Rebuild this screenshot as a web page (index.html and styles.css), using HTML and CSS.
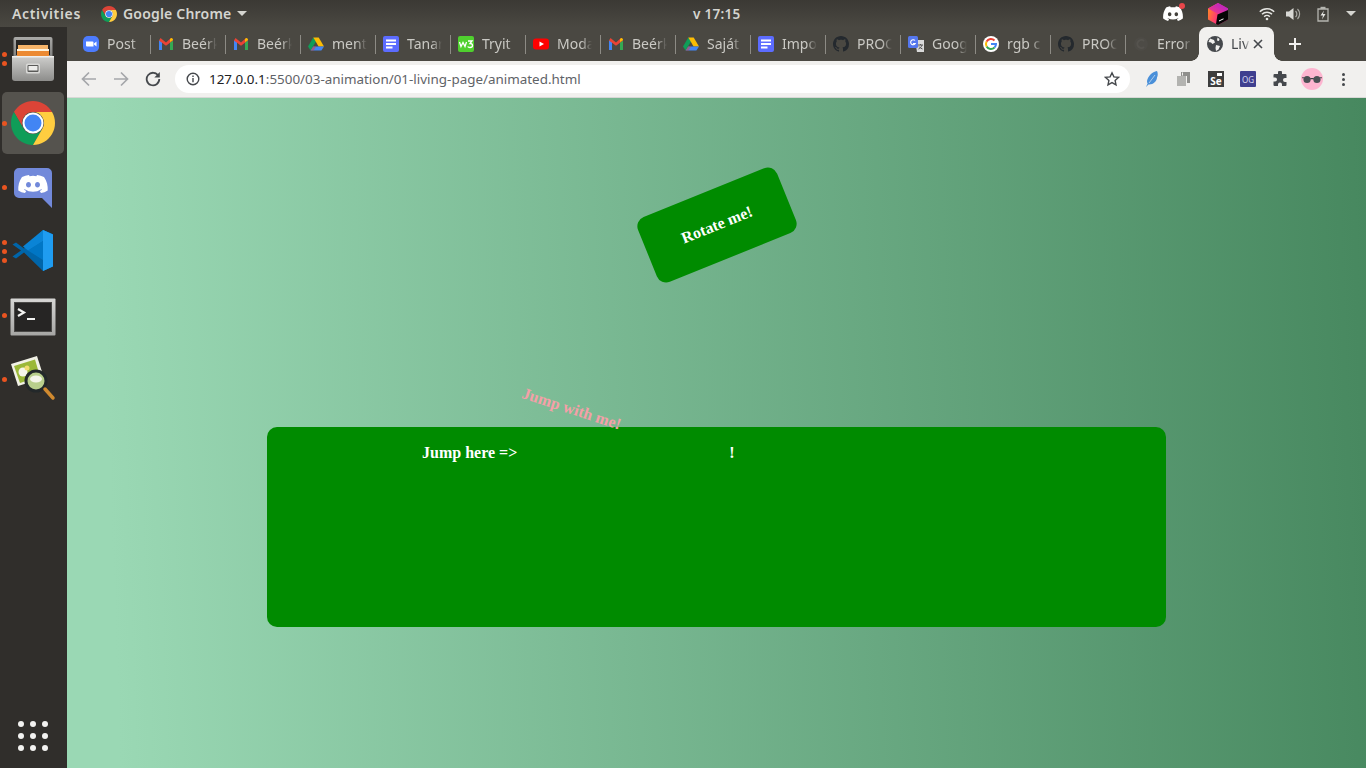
FILE: index.html
```html
<!DOCTYPE html>
<html lang="en">
<head>
<meta charset="utf-8">
<title>Living page</title>
<link rel="stylesheet" href="styles.css">
</head>
<body>
<svg class="defs" width="0" height="0" aria-hidden="true">
  <defs>
    <symbol id="chrome" viewBox="2 2 44 44">
      <path fill="#db4437" d="M4.950 13A22 22 0 0 1 43.050 13H24A11 11 0 0 0 14.470 29.500Z"/>
      <path fill="#0f9d58" d="M4.950 13 14.470 29.500A11 11 0 0 0 33.530 29.500L24 46A22 22 0 0 1 4.950 13Z"/>
      <path fill="#ffcd40" d="M24 46 33.530 29.500A11 11 0 0 0 24 13H43.050A22 22 0 0 1 24 46Z"/>
      <circle cx="24" cy="24" r="10.500" fill="#fff"/>
      <circle cx="24" cy="24" r="8.500" fill="#4285f4"/>
    </symbol>
    <symbol id="gmail" viewBox="0 0 16 16">
      <path fill="#4285f4" d="M1 14V4l3 2v8z"/>
      <path fill="#34a853" d="M12 14V6l3-2v10z"/>
      <path fill="#ea4335" d="M1 4.500 2.500 2 8 6.500 13 2l2 2.500-7 5.300z"/>
      <path fill="#fbbc04" d="M12 6V3l1.200-1.100C14.500 1.800 15 3 15 4z"/>
    </symbol>
    <symbol id="drive" viewBox="0 0 16 16">
      <path fill="#0f9d58" d="M5.300 1.500 0 10.500l2.600 4L8 5.500z"/>
      <path fill="#fbbc04" d="M5.300 1.500h5.400l5.300 9h-5.400z"/>
      <path fill="#4285f4" d="M5.200 10.500H16l-2.600 4H2.600z"/>
      <path fill="#db4437" d="M2.600 14.500h3l2.500-4H5.200z" opacity=".55"/>
    </symbol>
    <symbol id="docs" viewBox="0 0 16 16">
      <rect width="16" height="16" rx="2" fill="#5c6cff"/>
      <path fill="#fff" d="M3 3.500h10v2H3zM3 7h10v2H3zM3 10.500h6.500v2H3z"/>
    </symbol>
    <symbol id="github" viewBox="0 0 16 16">
      <path fill="#24292e" d="M8 0C3.580 0 0 3.580 0 8c0 3.540 2.290 6.530 5.470 7.590.4.070.55-.17.55-.38 0-.19-.01-.82-.01-1.490-2.010.37-2.530-.49-2.690-.94-.09-.23-.48-.94-.82-1.130-.28-.15-.68-.52-.01-.53.63-.01 1.080.58 1.230.82.72 1.210 1.870.87 2.330.66.070-.52.280-.87.510-1.070-1.780-.2-3.640-.89-3.640-3.950 0-.87.310-1.590.820-2.150-.08-.2-.36-1.020.08-2.120 0 0 .67-.21 2.200.82.640-.18 1.320-.27 2-.27s1.360.09 2 .27c1.530-1.040 2.200-.82 2.200-.82.44 1.100.16 1.920.08 2.120.51.560.82 1.270.82 2.150 0 3.070-1.870 3.750-3.650 3.950.29.250.54.730.54 1.480 0 1.070-.01 1.930-.01 2.200 0 .210.150.460.550.380A8.010 8.010 0 0 0 16 8c0-4.420-3.580-8-8-8z"/>
    </symbol>
  </defs>
</svg>

<header class="topbar">
  <div class="top-left">
    <span class="activities">Activities</span>
    <span class="appmenu">
      <svg class="chrome-small"><use href="#chrome"/></svg>
      <span class="appname">Google Chrome</span>
      <i class="caret"></i>
    </span>
  </div>
  <div class="clock">v 17:15</div>
  <div class="tray">
    <span class="tray-discord">
      <svg viewBox="0 0 24 18" width="20" height="15"><path fill="#fff" d="M20.300 1.800A19 19 0 0 0 15.500.3l-.7 1.300a18 18 0 0 0-5.600 0L8.500.3a19 19 0 0 0-4.800 1.500C.7 6.300-.2 10.700.2 15a19 19 0 0 0 5.900 3l1.200-2-1.900-1 .5-.4a13.600 13.600 0 0 0 12.200 0l.5.400-1.900 1 1.200 2a19 19 0 0 0 5.900-3c.5-5-.8-9.400-3.500-13.200zM8 12.400c-1.200 0-2.100-1.100-2.100-2.400S6.800 7.600 8 7.600s2.200 1.100 2.100 2.400c0 1.300-.9 2.400-2.100 2.400zm8 0c-1.200 0-2.100-1.100-2.100-2.400s.9-2.400 2.100-2.400 2.200 1.100 2.100 2.400c0 1.300-.9 2.400-2.100 2.400z"/></svg>
      <i class="tray-badge"></i>
    </span>
    <svg class="jb" viewBox="0 0 20 22" width="20" height="22">
      <defs>
        <linearGradient id="jbg" x1="0" y1="0" x2="1" y2=".35"><stop offset="0" stop-color="#ff9419"/><stop offset=".55" stop-color="#ff3d6e"/><stop offset="1" stop-color="#e5127d"/></linearGradient>
        <linearGradient id="jbt" x1="0" y1="1" x2="1" y2="0"><stop offset="0" stop-color="#fb3d7a"/><stop offset="1" stop-color="#a91fd6"/></linearGradient>
      </defs>
      <path fill="url(#jbg)" d="M10 0 20 5.500V16.500L10 22 0 16.500V5.500Z"/>
      <path fill="url(#jbt)" d="M10 0 20 5.500V11L10 11 0 5.500Z"/>
      <path fill="#050505" d="M9.500 11.500 20 7V16.500L10 22 8 21Z"/>
      <path fill="#fff" d="M11 17.500 15.500 15.300V16.300L11 18.500Z"/>
    </svg>
    <svg class="wifi" viewBox="0 0 16 14" width="16" height="14"><g fill="none" stroke="#e6e6e3" stroke-width="1.500"><path d="M.8 4.800a10.200 10.200 0 0 1 14.400 0"/><path d="M3 7.300a7 7 0 0 1 10 0"/><path d="M5.200 9.700a4 4 0 0 1 5.600 0"/></g><circle cx="8" cy="12" r="1.300" fill="#e6e6e3"/></svg>
    <svg class="vol" viewBox="0 0 16 14" width="16" height="14"><path fill="#d8d8d4" d="M0 4.500h3L7.500 1v12L3 9.500H0z"/><path fill="none" stroke="#a9a9a4" stroke-width="1.200" d="M9.500 4a4 4 0 0 1 0 6M11.500 2a7 7 0 0 1 0 10"/></svg>
    <svg class="batt" viewBox="0 0 12 16" width="12" height="16"><path fill="none" stroke="#b5b5b0" stroke-width="1.300" d="M1 3h10v12H1z"/><path fill="#b5b5b0" d="M3.500.8h5V3h-5z"/><path fill="#e6e6e3" d="M7 4.500 3.500 9.500H6L5 13.500l3.500-5.500H6z"/></svg>
    <i class="caret caret-tray"></i>
  </div>
</header>

<div class="workspace">
  <nav class="dock">
    <div class="dock-item">
      <span class="pips"><i></i><i></i></span>
      <svg class="dock-icon icon-files" viewBox="0 0 42 44" width="42" height="44">
        <defs>
          <linearGradient id="cab" x1="0" y1="0" x2="0" y2="1"><stop offset="0" stop-color="#cfcfcd"/><stop offset="1" stop-color="#8d8d8b"/></linearGradient>
          <linearGradient id="cabtop" x1="0" y1="0" x2="0" y2="1"><stop offset="0" stop-color="#a9a9a7"/><stop offset="1" stop-color="#7d7d7b"/></linearGradient>
        </defs>
        <rect x="1.500" y="0" width="39" height="22" rx="2" fill="url(#cabtop)"/>
        <rect x="4" y="3" width="34" height="15" fill="#262523"/>
        <rect x="6" y="8" width="30" height="4" fill="#f6b469"/>
        <rect x="5" y="12" width="32" height="2" fill="#fff3dc"/>
        <rect x="5" y="14" width="32" height="5" fill="#ec8a32"/>
        <path fill="url(#cab)" d="M0 19h42v22a3 3 0 0 1-3 3H3a3 3 0 0 1-3-3z"/>
        <rect x="0" y="19" width="42" height="1.500" fill="#f0f0ee"/>
        <rect x="14" y="26.500" width="14" height="10" rx="1.500" fill="#d9d9d7"/>
        <rect x="15.500" y="28" width="11" height="7" rx="1" fill="#5a5a58"/>
        <rect x="16.500" y="29" width="9" height="4.500" fill="#ececea"/>
      </svg>
    </div>
    <div class="dock-item dock-active">
      <span class="pips"><i></i></span>
      <svg class="dock-icon" width="44" height="44"><use href="#chrome"/></svg>
    </div>
    <div class="dock-item">
      <span class="pips"><i></i></span>
      <svg class="dock-icon icon-discord" viewBox="0 0 38 40" width="38" height="40">
        <path fill="#7289da" d="M5 0h28a5 5 0 0 1 5 5v35l-10-10H5a5 5 0 0 1-5-5V5a5 5 0 0 1 5-5z"/>
        <path fill="#fff" d="M30 9a18 18 0 0 0-7-2l-.6 1.200a17 17 0 0 0-6.800 0L15 7a18 18 0 0 0-7 2C5 13 4 18 4.300 22.500A15 15 0 0 0 11 25l1.300-2-2.300-1.200.7-.5a15 15 0 0 0 16.600 0l.7.500L25.700 23l1.300 2a15 15 0 0 0 6.700-2.500C34 18 33 13 30 9zM14.500 19.500c-1.400 0-2.500-1.300-2.500-2.800s1.100-2.800 2.500-2.800 2.500 1.300 2.500 2.800-1.100 2.800-2.500 2.800zm9 0c-1.400 0-2.500-1.300-2.500-2.800s1.100-2.800 2.500-2.800 2.500 1.300 2.500 2.800-1.100 2.800-2.500 2.800z"/>
      </svg>
    </div>
    <div class="dock-item">
      <span class="pips"><i></i><i></i><i></i></span>
      <svg class="dock-icon icon-code" viewBox="0 0 42 43" width="42" height="43">
        <path fill="#0065a9" d="M41 5.300v32L31 42 12 23.500 4 29.500.5 27.500 9 21.500.5 15.500 4 13.500l8 6L31 1z"/>
        <path fill="#007acc" d="M31 1 41 5.500V37L31 42V12L16 21.500 31 31z" opacity=".8"/>
        <path fill="#1f9cf0" d="M31 1 41 5.500v32L31 42z"/>
        <path fill="#0a84d6" d="M31 12 16 21.500 11 17.500 31 1z"/>
      </svg>
    </div>
    <div class="dock-item">
      <span class="pips"><i></i></span>
      <svg class="dock-icon icon-term" viewBox="0 0 46 38" width="46" height="38">
        <defs><linearGradient id="tframe" x1="0" y1="0" x2="0" y2="1"><stop offset="0" stop-color="#d6d6d4"/><stop offset="1" stop-color="#a6a6a4"/></linearGradient></defs>
        <rect x=".5" y=".5" width="45" height="37" rx="1" fill="url(#tframe)"/>
        <rect x="4" y="4" width="38" height="30" fill="#4a4947"/>
        <rect x="5" y="5" width="36" height="28" fill="#262524"/>
        <path fill="none" stroke="#f2f2f0" stroke-width="2.200" d="M8 11l6 3.500L8 18"/>
        <rect x="17" y="20" width="8" height="2" fill="#f2f2f0"/>
      </svg>
    </div>
    <div class="dock-item">
      <span class="pips"><i></i></span>
      <svg class="dock-icon" viewBox="0 0 46 46" width="46" height="46">
        <path fill="#f1f1e6" d="M1 8 27 0l7 22-26 8z"/>
        <path fill="#9bb838" d="M4 10 25 3.500l5 17L10 27z"/>
        <circle cx="13" cy="16" r="4.500" fill="#f5f5ea"/>
        <circle cx="17" cy="12" r="2.500" fill="#f2dd70"/>
        <circle cx="26" cy="25" r="10" fill="#b9cf8c" stroke="#23282a" stroke-width="3"/>
        <ellipse cx="26" cy="23" rx="6" ry="3.500" fill="#f5f5ea"/>
        <path stroke="#d08a2f" stroke-width="3.500" stroke-linecap="round" d="M35 33l8 9"/>
      </svg>
    </div>
    <div class="app-grid">
      <i></i><i></i><i></i><i></i><i></i><i></i><i></i><i></i><i></i>
    </div>
  </nav>

  <div class="browser">
    <div class="tabstrip">
      <div class="tab"><svg class="fav" viewBox="0 0 16 16"><rect width="16" height="16" rx="5" fill="#4d7cfe"/><path fill="#fff" d="M3 5.500h6.500a1 1 0 0 1 1 1v4H4a1 1 0 0 1-1-1zM11 7.500l2.500-2v5l-2.500-2z"/></svg><span class="tab-title">Post</span></div>
      <div class="tab"><svg class="fav"><use href="#gmail"/></svg><span class="tab-title">Beérk</span></div>
      <div class="tab"><svg class="fav"><use href="#gmail"/></svg><span class="tab-title">Beérk</span></div>
      <div class="tab"><svg class="fav"><use href="#drive"/></svg><span class="tab-title">ment</span></div>
      <div class="tab"><svg class="fav"><use href="#docs"/></svg><span class="tab-title">Tanar</span></div>
      <div class="tab"><svg class="fav" viewBox="0 0 16 16"><rect width="16" height="16" rx="2" fill="#4fd02e"/><path fill="none" stroke="#fff" stroke-width="1.300" d="M1.500 6l1.500 4.500L5 6.500l2 4L8.500 6M10 5h4l-2 2.500c2 0 2.500 1 2.500 2s-1 2-2.500 2-2-.5-2.300-1"/></svg><span class="tab-title">Tryit</span></div>
      <div class="tab"><svg class="fav" viewBox="0 0 16 16"><rect y="2.500" width="16" height="11" rx="3" fill="#f00"/><path fill="#fff" d="M6.500 5.500v5L11 8z"/></svg><span class="tab-title">Moda</span></div>
      <div class="tab"><svg class="fav"><use href="#gmail"/></svg><span class="tab-title">Beérk</span></div>
      <div class="tab"><svg class="fav"><use href="#drive"/></svg><span class="tab-title">Saját</span></div>
      <div class="tab"><svg class="fav"><use href="#docs"/></svg><span class="tab-title">Impo</span></div>
      <div class="tab"><svg class="fav"><use href="#github"/></svg><span class="tab-title">PROC</span></div>
      <div class="tab"><svg class="fav" viewBox="0 0 16 16"><path fill="#d9d9d9" d="M7 4h9v12H9z"/><rect width="10" height="12" rx="1.500" fill="#5577ee"/><path fill="none" stroke="#fff" stroke-width="1.100" d="M7 4.500a2.500 2.500 0 1 0 .3 3H5"/><path fill="none" stroke="#555" stroke-width="1" d="M10 9h5M12.500 8v1M14 9c-.5 2-2 3.500-3.500 4M11 10.500c.8 1.200 2 2 3.500 2.500"/></svg><span class="tab-title">Goog</span></div>
      <div class="tab"><svg class="fav" viewBox="0 0 16 16"><circle cx="8" cy="8" r="8" fill="#fff"/><path fill="none" stroke="#4285f4" stroke-width="2" d="M8 8h5a5 5 0 0 1-1.500 3.500"/><path fill="none" stroke="#34a853" stroke-width="2" d="M11.500 11.500A5 5 0 0 1 3.600 10.400"/><path fill="none" stroke="#fbbc05" stroke-width="2" d="M3.600 10.400a5 5 0 0 1 0-4.800"/><path fill="none" stroke="#ea4335" stroke-width="2" d="M3.600 5.600A5 5 0 0 1 11.500 4.500"/></svg><span class="tab-title">rgb c</span></div>
      <div class="tab"><svg class="fav"><use href="#github"/></svg><span class="tab-title">PROC</span></div>
      <div class="tab tab-last"><svg class="fav" viewBox="0 0 16 16"><circle cx="8" cy="8" r="7" fill="#4d4b46"/><path fill="none" stroke="#55534e" stroke-width="2" d="M11 5a4 4 0 1 0 0 6"/></svg><span class="tab-title">Error</span></div>
      <div class="tab tab-active">
        <svg class="fav" viewBox="0 0 16 16"><circle cx="8" cy="8" r="8" fill="#45484c"/><path fill="#f1f0ee" d="M3 2.500 7 4l1 2.500L5.500 8 4 6.500 1.500 6zM9 9l4 1-1.500 3.500L9 15l-.5-3zM10.500 1.500 12.500 3l-.5 2-2-.5z"/></svg>
        <span class="tab-title">Liv</span>
        <svg class="tab-x" viewBox="0 0 10 10" width="10" height="10"><path stroke="#45484c" stroke-width="1.600" d="M1 1l8 8M9 1l-8 8"/></svg>
      </div>
      <svg class="new-tab" viewBox="0 0 12 12" width="12" height="12"><path stroke="#f1f0ee" stroke-width="2" d="M6 0v12M0 6h12"/></svg>
    </div>

    <div class="toolbar">
      <svg class="tb-btn" viewBox="0 0 16 16" width="16" height="16"><path fill="none" stroke="#a5a7aa" stroke-width="1.700" d="M15 8H2M8 1.500 1.500 8 8 14.500"/></svg>
      <svg class="tb-btn" viewBox="0 0 16 16" width="16" height="16"><path fill="none" stroke="#a5a7aa" stroke-width="1.700" d="M1 8h13M8 1.500 14.500 8 8 14.500"/></svg>
      <svg class="tb-btn tb-reload" viewBox="0 0 16 16" width="16" height="16"><path fill="none" stroke="#45484c" stroke-width="1.800" d="M13.500 5A6.300 6.300 0 1 0 14.300 8"/><path fill="#45484c" d="M14.800 1v5.500H9.300z"/></svg>
      <div class="omnibox">
        <svg class="info" viewBox="0 0 14 14" width="14" height="14"><circle cx="7" cy="7" r="5.800" fill="none" stroke="#45484c" stroke-width="1.400"/><path fill="#45484c" d="M6.300 6h1.400v4.300H6.300zM6.300 3.500h1.400v1.400H6.300z"/></svg>
        <span class="url"><b>127.0.0.1</b>:5500/03-animation/01-living-page/animated.html</span>
        <svg class="star" viewBox="0 0 16 16" width="16" height="16"><path fill="none" stroke="#45484c" stroke-width="1.400" d="M8 1.800l1.900 4.100 4.500.5-3.300 3 .9 4.400L8 11.600l-4 2.200.9-4.400-3.300-3 4.500-.5z"/></svg>
      </div>
      <div class="extensions">
        <svg viewBox="0 0 16 18" width="16" height="18"><path fill="#4a90d9" d="M13 1C8 2 4 6 3 11c0 1 .2 2 .6 2.600L2 17l2.500-2.500C9 15 13 11 13 7.500c1-2 1-4.500 0-6.500z"/><path stroke="#c8dcf2" stroke-width=".8" d="M5 13 11 5"/></svg>
        <svg viewBox="0 0 16 16" width="16" height="16"><path fill="#8f8f8c" d="M5 1h9v11h-3V5H5z"/><path fill="#b3b3b0" d="M1 5h9v10H1z"/><path fill="#f1f0ee" d="M6 1.500h1v3H6z"/></svg>
        <span class="ext-se"><i class="se-cam"></i><span>Se</span></span>
        <span class="ext-og">OG</span>
        <svg viewBox="0 0 16 16" width="16" height="16"><path fill="#45484c" d="M6 1.500a2 2 0 0 1 4 0V3h3.500a1 1 0 0 1 1 1v3H13a2 2 0 0 0 0 4h1.500v3a1 1 0 0 1-1 1H10v-1.500a2 2 0 0 0-4 0V15H2.500a1 1 0 0 1-1-1v-3.500H3a2 2 0 0 0 0-4H1.500V4a1 1 0 0 1 1-1H6z"/></svg>
        <span class="avatar"><svg viewBox="0 0 22 10" width="20" height="9"><circle cx="5.500" cy="5" r="4" fill="#4a5054"/><circle cx="16.500" cy="5" r="4" fill="#4a5054"/><path stroke="#3c4145" stroke-width="1.200" d="M9 4h4M0 3h2M20 3h2"/></svg></span>
        <span class="kebab"><i></i><i></i><i></i></span>
      </div>
    </div>

    <main class="page">
      <div class="rotate-card">Rotate me!</div>
      <section class="jump-box">
        <span class="jump-label">Jump here =&gt;</span><span class="jump-slot"></span><span class="jump-label">!</span>
        <span class="jumper">Jump with me!</span>
      </section>
    </main>
  </div>
</div>
</body>
</html>
```

FILE: styles.css
```css
* { box-sizing: border-box; }
html, body { margin: 0; height: 100%; overflow: hidden; }
body {
  width: 1366px;
  height: 768px;
  display: flex;
  flex-direction: column;
  font-family: "Noto Sans", sans-serif;
  background: #302e2b;
}
.defs { position: absolute; }
i { display: block; }

/* top bar */
.topbar {
  flex: 0 0 27px;
  display: flex;
  align-items: center;
  position: relative;
  padding-left: 12px;
  background: linear-gradient(#3b3934, #4a4842);
  color: #d5d5d0;
  font-size: 14px;
  font-weight: 600;
}
.top-left { display: flex; align-items: center; gap: 20px; }
.activities { letter-spacing: .65px; }
.appname { letter-spacing: .2px; }
.appmenu { display: flex; align-items: center; gap: 6px; }
.chrome-small { width: 16px; height: 16px; }
.caret {
  width: 0; height: 0;
  border-left: 5px solid transparent;
  border-right: 5px solid transparent;
  border-top: 5px solid #d5d5d0;
}
.clock { position: absolute; left: 693px; font-size: 13.500px; letter-spacing: .3px; }
.tray { margin-left: auto; display: flex; align-items: center; padding-right: 10px; }
.tray-discord { position: relative; display: flex; margin-right: 25px; }
.tray-badge {
  position: absolute; top: -3px; right: -2px;
  width: 6px; height: 6px; border-radius: 50%;
  background: #e8464a;
}
.jb { margin-right: 31px; }
.wifi { margin-right: 11px; }
.vol { margin-right: 15px; }
.batt { margin-right: 17px; }

/* layout */
.workspace { flex: 1; display: flex; min-height: 0; }
.dock {
  flex: 0 0 67px;
  display: flex;
  flex-direction: column;
  padding: 1px 0 0 2px;
  background: #302e2b;
}
.dock-item {
  position: relative;
  flex: 0 0 62px;
  width: 62px;
  margin-bottom: 2px;
  display: flex;
  align-items: center;
  justify-content: center;
  border-radius: 5px;
}
.dock-active { background: #55534e; }
.dock-icon { display: block; }
.icon-files { margin-top: -1px; }
.icon-discord { margin-top: 2px; }
.icon-code { margin-top: -2px; }
.icon-term { margin-top: 3px; }
.pips {
  position: absolute;
  left: 0; top: 0; bottom: 0;
  width: 5px;
  display: flex;
  flex-direction: column;
  justify-content: center;
  gap: 4px;
}
.pips i {
  width: 5px; height: 5px;
  border-radius: 50%;
  background: #e95420;
}
.app-grid {
  margin: auto 0 17px 16px;
  display: grid;
  grid-template-columns: repeat(3, 6px);
  gap: 6px;
}
.app-grid i { width: 6px; height: 6px; border-radius: 50%; background: #f2f2f0; }

.browser { flex: 1; min-width: 0; display: flex; flex-direction: column; }

/* tabs */
.tabstrip {
  flex: 0 0 34px;
  display: flex;
  align-items: center;
  padding-left: 8px;
  background: #4a4842;
}
.tab {
  position: relative;
  flex: 0 0 75px;
  min-width: 0;
  height: 34px;
  display: flex;
  align-items: center;
  gap: 8px;
  padding: 0 8px;
  color: #cac9c4;
  font-size: 14px;
}
.tab::after {
  content: "";
  position: absolute;
  right: -1px; top: 8px; bottom: 7px;
  width: 1px;
  background: #8d8b85;
}
.tab-last::after { display: none; }
.tab-title {
  flex: 1;
  min-width: 0;
  overflow: hidden;
  white-space: nowrap;
  padding-bottom: 2px;
  -webkit-mask-image: linear-gradient(to right, #000 70%, transparent);
  mask-image: linear-gradient(to right, #000 70%, transparent);
}
.fav { flex: 0 0 16px; width: 16px; height: 16px; }
.tab-active {
  margin-left: -1px;
  background: #f1f0ee;
  color: #45484c;
  border-radius: 8px 8px 0 0;
}
.tab-active::before,
.tab-active::after {
  content: "";
  position: absolute;
  top: auto;
  bottom: 0;
  width: 8px;
  height: 8px;
  background: radial-gradient(circle at var(--foot) 0, transparent 7.500px, #f1f0ee 8px);
}
.tab-active::before { --foot: 0; left: -8px; right: auto; }
.tab-active::after { --foot: 100%; right: -8px; left: auto; }
.tab-active .tab-title { flex: 0 0 19px; }
.tab-x { flex: 0 0 10px; margin-left: -5px; }
.new-tab { margin-left: 15px; }

/* toolbar */
.toolbar {
  flex: 0 0 37px;
  display: flex;
  align-items: center;
  padding: 0 0 0 14px;
  background: #f1f0ee;
  border-bottom: 1px solid #d8d8d6;
}
.tb-btn { margin-right: 16px; }
.tb-reload { margin-right: 14px; }
.omnibox {
  flex: 0 0 955px;
  height: 28px;
  display: flex;
  align-items: center;
  padding: 0 10px 0 11px;
  background: #fff;
  border-radius: 14px;
}
.url {
  margin-left: 9px;
  font-size: 13.420px;
  color: #5f6368;
  white-space: nowrap;
}
.url b { font-weight: 400; color: #202124; }
.star { margin-left: auto; }
.extensions {
  display: flex;
  align-items: center;
  gap: 16px;
  margin-left: 14px;
}
.ext-se {
  position: relative;
  width: 16px; height: 16px;
  display: flex; align-items: flex-end; justify-content: center;
  background: #3d3d3d;
  color: #fff;
  font-size: 10px;
  font-weight: 700;
  line-height: 11px;
}
.se-cam {
  position: absolute;
  top: 2px; right: 2px;
  width: 5px; height: 3px;
  background: #fff;
}
.ext-og {
  width: 16px; height: 16px;
  display: flex; align-items: center; justify-content: center;
  background: #3f3f8f;
  border-radius: 1px;
  color: #d8d8f0;
  font-size: 8px;
}
.avatar {
  width: 22px; height: 22px;
  margin: 0 -3px;
  border-radius: 50%;
  background: #fdb5d0;
  display: flex; align-items: center; justify-content: center;
}
.kebab { display: flex; flex-direction: column; gap: 2px; margin-left: 6px; }
.kebab i { width: 3px; height: 3px; border-radius: 50%; background: #45484c; }

/* page */
.page {
  flex: 1;
  min-height: 0;
  display: flex;
  flex-direction: column;
  align-items: center;
  padding-top: 92px;
  background: linear-gradient(88deg, #9ad8b4 4%, #47885f 100%);
  font-family: "Liberation Serif", serif;
  font-weight: 700;
  font-size: 16px;
}
.rotate-card {
  width: 150px;
  height: 70px;
  display: flex;
  align-items: center;
  justify-content: center;
  background: #008b00;
  color: #fff;
  border-radius: 10px;
  transform: rotate(-22deg);
}
.jump-box {
  position: relative;
  width: 899px;
  height: 200px;
  margin-top: 167px;
  padding: 17px 0 0 155px;
  background: #008b00;
  color: #fff;
  border-radius: 10px;
  line-height: 18px;
  display: flex;
  align-items: flex-start;
}
.jump-slot { width: 212px; }
.jumper {
  position: absolute;
  left: 253px;
  top: -27px;
  color: #f5a0a8;
  white-space: nowrap;
  transform: rotate(18deg);
}
```
